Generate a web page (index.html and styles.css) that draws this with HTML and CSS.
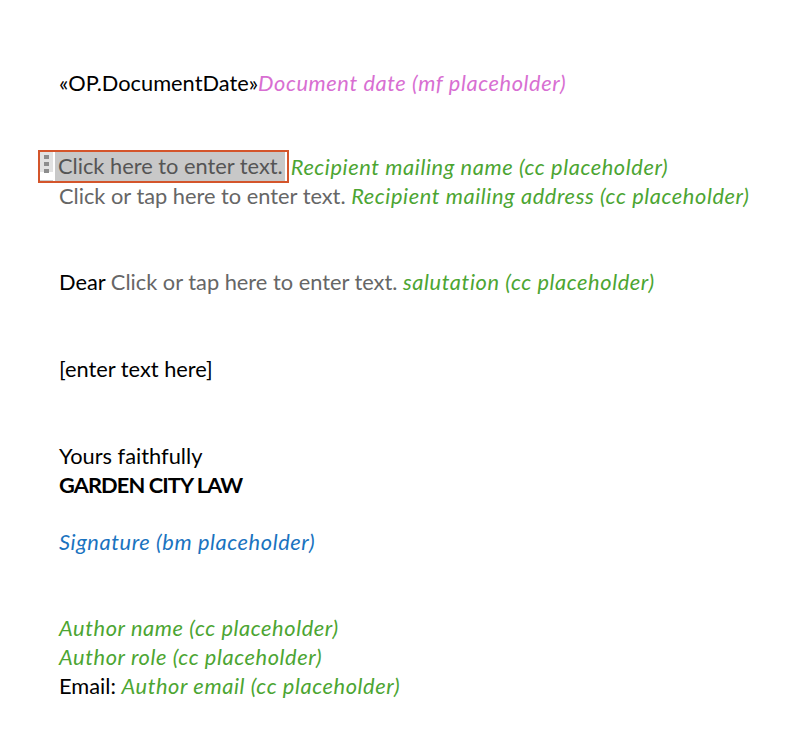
FILE: index.html
```html
<!DOCTYPE html>
<html>
  <head>
    <title>Letter template</title>
    <link rel="stylesheet" href="styles.css">
  </head>
  <body>
    <div class="page">
      <p class="first">&laquo;OP.DocumentDate&raquo;<span class="note mf">Document date (mf placeholder)</span></p>

      <p class="recipient">
        <span class="cc-box"><span class="cc-handle"><i></i><i></i><i></i></span><span class="cc-text">Click here to enter text.</span></span><span class="note cc">Recipient mailing name (cc placeholder)</span><br>
        <span class="hint">Click or tap here to enter text.</span> <span class="note cc">Recipient mailing address (cc placeholder)</span>
      </p>

      <p class="block dear">Dear <span class="hint">Click or tap here to enter text.</span> <span class="note cc">salutation (cc placeholder)</span></p>

      <p class="block">[enter text here]</p>

      <p class="block">Yours faithfully<br><b>GARDEN CITY LAW</b></p>

      <p class="sign"><span class="note bm">Signature (bm placeholder)</span></p>

      <p class="block author">
        <span class="note cc">Author name (cc placeholder)</span><br>
        <span class="note cc">Author role (cc placeholder)</span><br>
        Email: <span class="note cc">Author email (cc placeholder)</span>
      </p>
    </div>
  </body>
</html>
```

FILE: styles.css
```css
body{
  margin: 0;
  background: #fff;
  color: #000;
  font-family: Lato, "Open Sans", sans-serif;
  font-size: 21.8px;
}

.page{
  padding: 68px 0 0 59px;
}

p{
  margin: 0;
  line-height: 29px;
  white-space: nowrap;
}
b{
  letter-spacing: -0.9px;
}

.recipient{
  margin-top: 55px;
}
.block{
  margin-top: 58px;
}
.dear{
  margin-top: 57px;
}
.sign{
  margin-top: 28px;
}
.author{
  margin-top: 57px;
}

.note{
  font-style: italic;
  letter-spacing: 0.6px;
}
.mf{
  color: #d86fd2;
}
.cc{
  color: #4ca532;
}
.bm{
  color: #1a73c0;
}
.hint{
  color: #666;
}

/* content control box */
.cc-box{
  display: inline-flex;
  align-items: stretch;
  height: 33px;
  margin: -2px 2px -2px -21px;
  border: 2.5px solid #d4552b;
  box-sizing: border-box;
  vertical-align: top;
  padding: 0 2px 0 0;
}
.cc-handle{
  width: 13px;
  border-right: 2px solid #fff;
  background: linear-gradient(#e2e2e2 0 20px, #fff 20px);
  box-shadow: inset 0 -1px 0 #ccc;
  display: flex;
  flex-direction: column;
  align-items: center;
  gap: 3px;
  padding-top: 3px;
}
.cc-handle i{
  width: 5px;
  height: 4px;
  background: #8d8d8d;
}
.cc-text{
  background: #c8c8c8;
  color: #555;
  line-height: 28px;
  padding: 0 2px 0 3px;
}
```
